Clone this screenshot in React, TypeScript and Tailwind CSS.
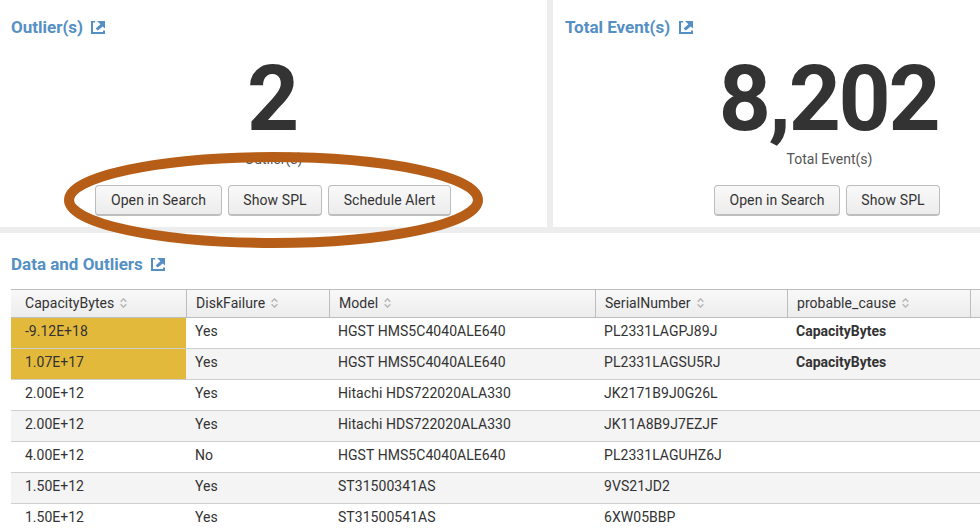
import React from "react";

function PopOutIcon() {
  return (
    <svg width="14" height="13" viewBox="0 0 14 13" className="block shrink-0" fill="#5590c4">
      <path d="M0 0h4.2v1.6H2v9.4h10V9.4h2V13H0z" />
      <path d="M6 0h8v7.6l-2.3-2.2-4.9 4.2-2.2-2.2 4.8-4.2z" />
    </svg>
  );
}

function SortIcon() {
  return (
    <svg width="7" height="10" viewBox="0 0 7 10" className="relative -top-px block shrink-0" fill="none" stroke="#b8b8b8" strokeWidth="1.5">
      <path d="M.6 3.7 3.5.9l2.9 2.8M.6 6.3l2.9 2.8 2.9-2.8" />
    </svg>
  );
}

function PanelTitle({ children, width }: { children: string; width: string }) {
  return (
    <h2 className="flex h-5 items-center text-[17px] font-bold leading-5 whitespace-nowrap text-[#5590c4]">
      <span className={width}>{children}</span>
      <PopOutIcon />
    </h2>
  );
}

function Button({ children, width }: { children: string; width: string }) {
  return (
    <button
      className={`${width} h-[31px] shrink-0 rounded-[4px] border border-b-2 border-[#bdbdbd] bg-linear-to-b from-[#f9f9f9] to-[#ececec] pb-px text-center text-[14px] leading-7 tracking-[0.1px] whitespace-nowrap text-[#333]`}
    >
      {children}
    </button>
  );
}

function Metric({ title, titleWidth, value, label, schedule }: { title: string; titleWidth: string; value: string; label: string; schedule?: boolean }) {
  return (
    <section className={`h-[227px] shrink-0 bg-white pt-[17px] ${schedule ? "w-[547px]" : "w-[553px]"}`}>
      <div className={schedule ? "pl-[11px]" : "pl-3"}>
        <PanelTitle width={titleWidth}>{title}</PanelTitle>
      </div>
      <div
        className={`h-[112px] pt-2 pr-[2px] text-center text-[91px] leading-[108px] font-bold text-[#333] ${schedule ? "tracking-[-1px]" : "tracking-[-2.3px]"}`}
      >
        {value}
      </div>
      <div className="h-5 text-center text-[14px] leading-5 text-[#555]">{label}</div>
      <div className={`flex justify-center gap-1.5 pt-4 ${schedule ? "pr-px" : "pr-[5px]"}`}>
        <Button width={schedule ? "w-[127px]" : "w-[126px]"}>Open in Search</Button>
        <Button width="w-[94px]">Show SPL</Button>
        {schedule && <Button width="w-[123px]">Schedule Alert</Button>}
      </div>
    </section>
  );
}

const columns = ["CapacityBytes", "DiskFailure", "Model", "SerialNumber", "probable_cause"];

const rows = [
  ["-9.12E+18", "Yes", "HGST HMS5C4040ALE640", "PL2331LAGPJ89J", "CapacityBytes"],
  ["1.07E+17", "Yes", "HGST HMS5C4040ALE640", "PL2331LAGSU5RJ", "CapacityBytes"],
  ["2.00E+12", "Yes", "Hitachi HDS722020ALA330", "JK2171B9J0G26L", ""],
  ["2.00E+12", "Yes", "Hitachi HDS722020ALA330", "JK11A8B9J7EZJF", ""],
  ["4.00E+12", "No", "HGST HMS5C4040ALE640", "PL2331LAGUHZ6J", ""],
  ["1.50E+12", "Yes", "ST31500341AS", "9VS21JD2", ""],
  ["1.50E+12", "Yes", "ST31500541AS", "6XW05BBP", ""],
];

const grid = "grid grid-cols-[175px_143px_266px_192px_183px_1fr]";

export default function App() {
  return (
    <main className="relative h-[530px] w-[980px] overflow-hidden bg-[#ededed] font-['Roboto',sans-serif] text-[#333]">
      <div className="flex gap-1.5">
        <Metric title="Outlier(s)" titleWidth="w-20" value="2" label="Outlier(s)" schedule />
        <Metric title="Total Event(s)" titleWidth="w-[114px]" value="8,202" label="Total Event(s)" />
      </div>
      <section className="mt-1.5 h-[297px] bg-white pt-[21px] pl-[11px]">
        <PanelTitle width="w-[140px]">Data and Outliers</PanelTitle>
        <div className="mt-[15px] text-[14px]">
          <div className={`${grid} h-[29px] border-y border-[#bdbdbd] bg-linear-to-b from-[#f9f9f9] to-[#ececec]`}>
            {columns.map((c, i) => (
              <div key={c} className={`flex items-center gap-[6px] tracking-[0.05px] ${i ? "border-l border-[#bdbdbd] pl-[9px]" : "pl-3.5"}`}>
                <span>{c}</span>
                <SortIcon />
              </div>
            ))}
            <div className="border-l border-[#bdbdbd]" />
          </div>
          {rows.map((r, i) => (
            <div key={i} className={`${grid} h-[31px] border-b border-[#cfcfcf] leading-[27px] ${i % 2 ? "bg-[#f4f4f4]" : "bg-white"}`}>
              {r.map((v, j) => (
                <div
                  key={j}
                  className={`${j ? "pl-[9px]" : "pl-3.5"} ${j === 4 ? "font-bold" : ""} ${j === 2 || j === 3 ? "tracking-[0.05px]" : ""} ${j === 0 && i < 2 ? "bg-[#e3b93c]" : ""}`}
                >
                  {v}
                </div>
              ))}
            </div>
          ))}
        </div>
      </section>
      <svg className="pointer-events-none absolute top-[150px] left-[62px]" width="424" height="100" viewBox="62 150 424 100" fill="none">
        <ellipse cx="273.5" cy="200" rx="204.5" ry="43" stroke="#b65e17" strokeWidth="10" />
      </svg>
    </main>
  );
}
